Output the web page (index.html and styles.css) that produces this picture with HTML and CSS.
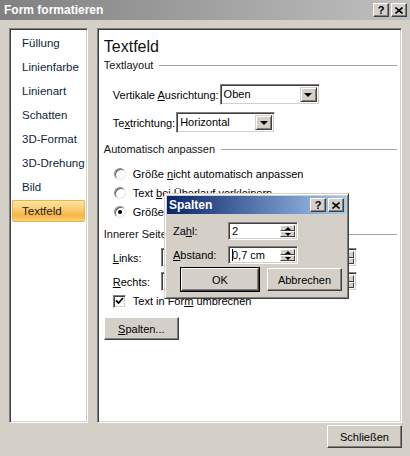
FILE: index.html
```html
<!DOCTYPE html>
<html lang="de">
<head>
<meta charset="utf-8">
<title>Form formatieren</title>
<link rel="stylesheet" href="styles.css">
</head>
<body>
<div class="window">
  <div class="titlebar">
    <span class="title">Form formatieren</span>
    <div class="tbtns">
      <span class="tbtn q">?</span>
      <span class="tbtn"><svg width="8" height="7" viewBox="0 0 8 7"><path d="M0.5 0.5 L7.5 6.5 M7.5 0.5 L0.5 6.5" stroke="#000" stroke-width="1.6"/></svg></span>
    </div>
  </div>
  <div class="content">
    <ul class="nav sunken">
      <li>Füllung</li>
      <li>Linienfarbe</li>
      <li>Linienart</li>
      <li>Schatten</li>
      <li>3D-Format</li>
      <li>3D-Drehung</li>
      <li>Bild</li>
      <li class="active">Textfeld</li>
    </ul>
    <div class="main sunken">
      <h1 class="heading">Textfeld</h1>
      <div class="section">Textlayout</div>
      <div class="row row1">
        <span class="lbl">Vertikale <u>A</u>usrichtung:</span>
        <div class="select w100"><span class="val">Oben</span><span class="dd"><i class="tri-down"></i></span></div>
      </div>
      <div class="row row2">
        <span class="lbl">Te<u>x</u>trichtung:</span>
        <div class="select w99"><span class="val">Horizontal</span><span class="dd"><i class="tri-down"></i></span></div>
      </div>
      <div class="section sec2">Automatisch anpassen</div>
      <div class="radios">
        <div class="radio"><span class="rb"></span><span>Größe <u>n</u>icht automatisch anpassen</span></div>
        <div class="radio"><span class="rb"></span><span>Text <u>b</u>ei Überlauf verkleinern</span></div>
        <div class="radio"><span class="rb on"></span><span>Größe</span></div>
      </div>
      <div class="section sec3">Innerer Seitenrand</div>
      <div class="mrow mrow1">
        <span class="mlbl"><u>L</u>inks:</span>
        <div class="spin-input wl"><span class="val"></span><span class="spin"><span class="su"><i class="tri-up-s"></i></span><span class="sd"><i class="tri-down-s"></i></span></span></div>
        <span class="mlbl2"></span>
        <div class="spin-input wr"><span class="val"></span><span class="spin"><span class="su"><i class="tri-up-s"></i></span><span class="sd"><i class="tri-down-s"></i></span></span></div>
      </div>
      <div class="mrow mrow2">
        <span class="mlbl"><u>R</u>echts:</span>
        <div class="spin-input wl"><span class="val"></span><span class="spin"><span class="su"><i class="tri-up-s"></i></span><span class="sd"><i class="tri-down-s"></i></span></span></div>
        <span class="mlbl2"></span>
        <div class="spin-input wr"><span class="val"></span><span class="spin"><span class="su"><i class="tri-up-s"></i></span><span class="sd"><i class="tri-down-s"></i></span></span></div>
      </div>
      <div class="check"><span class="cb"><svg width="9" height="8" viewBox="0 0 9 8"><path d="M1 3.5 L3.5 6 L8 1" fill="none" stroke="#000" stroke-width="1.8"/></svg></span><span>Text in For<u>m</u> umbrechen</span></div>
      <div class="btn spalten"><u>S</u>palten...</div>
    </div>
  </div>
  <div class="footer">
    <div class="btn close">Schließen</div>
  </div>

  <div class="dialog">
    <div class="dtitle">
      <span class="dtext">Spalten</span>
      <div class="tbtns dt">
        <span class="tbtn q">?</span>
        <span class="tbtn"><svg width="8" height="7" viewBox="0 0 8 7"><path d="M0.5 0.5 L7.5 6.5 M7.5 0.5 L0.5 6.5" stroke="#000" stroke-width="1.6"/></svg></span>
      </div>
    </div>
    <div class="drow drow1">
      <span class="dlbl">Za<u>h</u>l:</span>
      <div class="spin-input dw"><span class="val">2</span><span class="spin"><span class="su"><i class="tri-up-s"></i></span><span class="sd"><i class="tri-down-s"></i></span></span></div>
    </div>
    <div class="drow drow2">
      <span class="dlbl"><u>A</u>bstand:</span>
      <div class="spin-input dw"><span class="val"><span class="caret"></span>0,7 cm</span><span class="spin"><span class="su"><i class="tri-up-s"></i></span><span class="sd"><i class="tri-down-s"></i></span></span></div>
    </div>
    <div class="dbtns">
      <div class="btn ok">OK</div>
      <div class="btn cancel">Abbrechen</div>
    </div>
  </div>
</div>
</body>
</html>
```

FILE: styles.css
```css
* { box-sizing: border-box; }
html, body { margin: 0; padding: 0; }
body {
  background: #d4d0c8;
  font-family: "Liberation Sans", Arial, sans-serif;
  font-size: 11px;
  color: #000;
}
u { text-decoration: underline; text-underline-offset: 1px; }

.window {
  position: relative;
  width: 410px;
  height: 456px;
  background: #d4d0c8;
  overflow: hidden;
}

.titlebar {
  height: 20px;
  background: linear-gradient(to right, #808080, #c0c0c0);
  display: flex;
  align-items: center;
  justify-content: space-between;
  padding: 0 3px 0 4px;
}
.title {
  color: #fff;
  font-weight: bold;
  font-size: 12px;
}
.tbtns { display: flex; gap: 2px; }
.tbtn {
  width: 16px;
  height: 14px;
  background: #d4d0c8;
  border: 1px solid;
  border-color: #fff #404040 #404040 #fff;
  box-shadow: inset -1px -1px #808080;
  display: flex;
  align-items: center;
  justify-content: center;
  font-weight: bold;
  font-size: 11px;
  line-height: 1;
}

.sunken {
  border: 1px solid;
  border-color: #808080 #fff #fff #808080;
  box-shadow: inset 1px 1px #404040, inset -1px -1px #d4d0c8;
  background: #fff;
}

.content {
  display: flex;
  gap: 9px;
  padding: 8px 8px 0 9px;
  height: 403px;
}

.nav {
  list-style: none;
  margin: 0;
  width: 79px;
  height: 395px;
  padding: 3px 2px 0 2px;
}
.nav li {
  height: 22px;
  line-height: 22px;
  margin-bottom: 2px;
  padding-left: 10px;
  color: #0f1f3d;
  font-size: 11.5px;
}
.nav li.active {
  background: linear-gradient(to bottom, #fde7a8 0%, #fbd27a 35%, #f7b544 70%, #fcd883 100%);
  box-shadow: inset 0 0 0 1px #e9b44f;
  border-radius: 2px;
  color: #222;
}

.main {
  width: 306px;
  height: 395px;
  padding: 8px 4px 0 6px;
  display: flex;
  flex-direction: column;
}
.heading {
  margin: 0;
  height: 20px;
  line-height: 20px;
  font-size: 16px;
  font-weight: normal;
  color: #111;
}
.section {
  height: 16px;
  line-height: 16px;
  display: flex;
  align-items: center;
  gap: 6px;
  color: #111;
}
.section::after {
  content: "";
  flex: 1;
  border-top: 1px solid #a0a0a0;
  margin-top: 1px;
}
.sec2 { margin-top: 8px; }
.sec3 { margin-top: 5px; }

.row {
  display: flex;
  align-items: center;
  padding-left: 9px;
  height: 21px;
}
.row1 { margin-top: 11px; }
.row2 { margin-top: 7px; }
.lbl { margin-right: 1px; }

.select {
  height: 21px;
  background: #fff;
  border: 1px solid;
  border-color: #808080 #fff #fff #808080;
  box-shadow: inset 1px 1px #404040, inset -1px -1px #d4d0c8;
  display: flex;
  align-items: stretch;
  padding: 2px;
}
.w100 { width: 100px; }
.w99 { width: 99px; }
.select .val { flex: 1; line-height: 15px; padding-left: 1px; }
.dd {
  width: 17px;
  background: #d4d0c8;
  border: 1px solid;
  border-color: #d4d0c8 #404040 #404040 #d4d0c8;
  box-shadow: inset 1px 1px #fff, inset -1px -1px #808080;
  display: flex;
  align-items: center;
  justify-content: center;
}
.tri-down {
  width: 0; height: 0;
  border-left: 4px solid transparent;
  border-right: 4px solid transparent;
  border-top: 4px solid #000;
}

.radios { margin-top: 7px; padding-left: 10px; }
.radio {
  height: 19px;
  display: flex;
  align-items: center;
  gap: 7px;
}
.rb {
  width: 12px;
  height: 12px;
  border-radius: 50%;
  background: #fff;
  border: 1px solid;
  border-color: #909090 #e8e8e8 #e8e8e8 #909090;
  box-shadow: inset 1px 1px #606060;
  position: relative;
}
.rb.on::after {
  content: "";
  position: absolute;
  left: 3px; top: 3px;
  width: 4px; height: 4px;
  border-radius: 50%;
  background: #000;
}

.mrow {
  display: flex;
  align-items: center;
  height: 19px;
  padding-left: 9px;
}
.mrow1 { margin-top: 6px; }
.mrow2 { margin-top: 5px; }
.mlbl { width: 48px; }
.mlbl2 { width: 42px; margin-left: 8px; }

.spin-input {
  height: 19px;
  background: #fff;
  border: 1px solid;
  border-color: #808080 #fff #fff #808080;
  box-shadow: inset 1px 1px #404040, inset -1px -1px #d4d0c8;
  display: flex;
  padding: 2px;
}
.wl { width: 72px; }
.wr { width: 74px; }
.spin-input .val { flex: 1; line-height: 14px; padding-left: 1px; white-space: nowrap; overflow: hidden; }
.spin { width: 15px; display: flex; flex-direction: column; }
.su, .sd {
  flex: 1;
  background: #d4d0c8;
  border: 1px solid;
  border-color: #fff #404040 #404040 #fff;
  display: flex;
  align-items: center;
  justify-content: center;
}
.tri-up-s {
  width: 0; height: 0;
  border-left: 3px solid transparent;
  border-right: 3px solid transparent;
  border-bottom: 3px solid #000;
}
.tri-down-s {
  width: 0; height: 0;
  border-left: 3px solid transparent;
  border-right: 3px solid transparent;
  border-top: 3px solid #000;
}

.check {
  margin-top: 2px;
  height: 16px;
  display: flex;
  align-items: center;
  gap: 7px;
  padding-left: 9px;
}
.cb {
  width: 13px;
  height: 13px;
  background: #fff;
  border: 1px solid;
  border-color: #808080 #fff #fff #808080;
  box-shadow: inset 1px 1px #404040, inset -1px -1px #d4d0c8;
  display: flex;
  align-items: center;
  justify-content: center;
}

.btn {
  background: #d4d0c8;
  border: 1px solid;
  border-color: #fff #404040 #404040 #fff;
  box-shadow: inset -1px -1px #808080;
  display: flex;
  align-items: center;
  justify-content: center;
  color: #000;
}
.spalten {
  margin-top: 8px;
  width: 75px;
  height: 23px;
}

.footer {
  display: flex;
  justify-content: flex-end;
  padding: 2px 8px 0 0;
}
.close {
  width: 75px;
  height: 23px;
}

/* Overlay dialog */
.dialog {
  position: absolute;
  left: 164px;
  top: 193px;
  width: 185px;
  height: 106px;
  background: #d4d0c8;
  border: 1px solid;
  border-color: #d4d0c8 #404040 #404040 #d4d0c8;
  box-shadow: inset 1px 1px #fff, inset -1px -1px #808080;
  padding: 2px;
}
.dtitle {
  height: 18px;
  background: linear-gradient(to right, #0a246a, #a6caf0);
  display: flex;
  align-items: center;
  justify-content: space-between;
  padding: 0 2px 0 2px;
}
.dtext {
  color: #fff;
  font-weight: bold;
  font-size: 12px;
}
.drow {
  display: flex;
  align-items: center;
  height: 18px;
  padding-left: 6px;
}
.drow1 { margin-top: 8px; }
.drow2 { margin-top: 6px; }
.dlbl { width: 55px; }
.dw { width: 70px; height: 18px; }
.dw .val { line-height: 13px; }
.caret {
  display: inline-block;
  width: 1px;
  height: 12px;
  background: #000;
  vertical-align: -2px;
  margin-right: -1px;
}
.dbtns {
  display: flex;
  gap: 8px;
  margin-top: 4px;
  padding-left: 14px;
}
.ok {
  width: 78px;
  height: 23px;
  outline: 1px solid #000;
  outline-offset: 0;
}
.cancel {
  width: 75px;
  height: 23px;
}
```
